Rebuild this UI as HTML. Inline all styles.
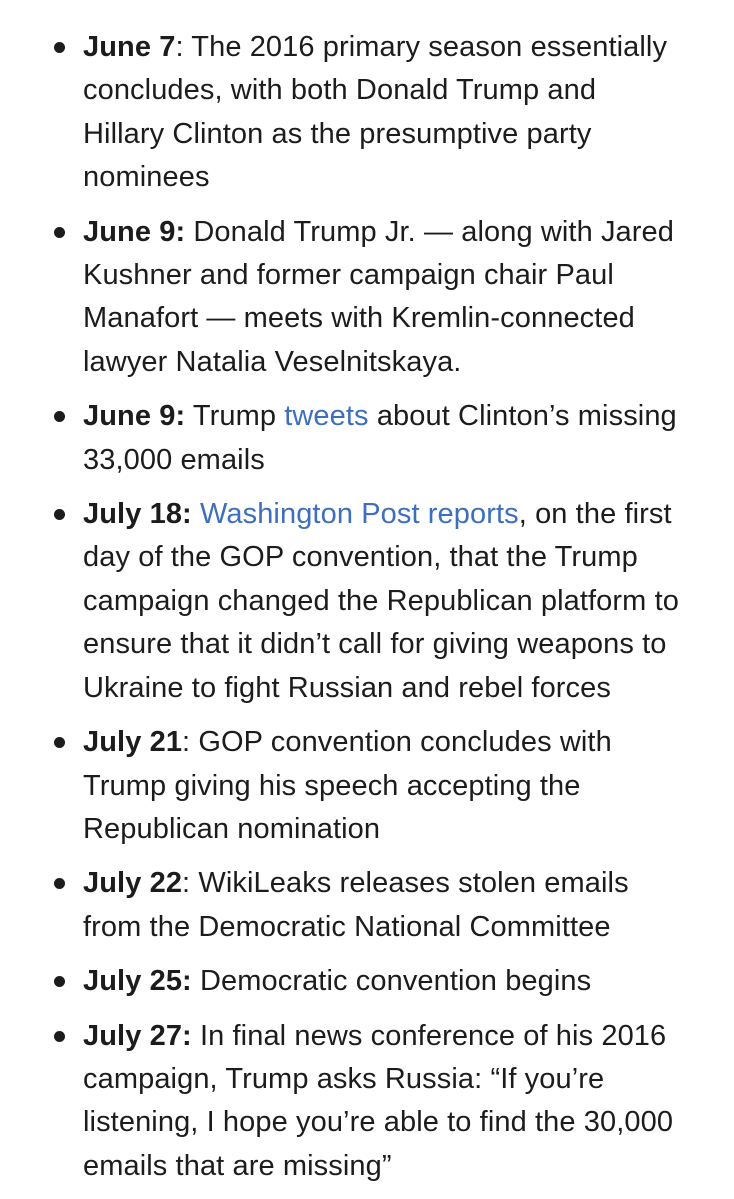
<!DOCTYPE html>
<html><head><meta charset="utf-8">
<style>
html,body{margin:0;padding:0;background:#fff;width:734px;height:1199px;overflow:hidden}
body{font-family:"Liberation Sans",Helvetica,Arial,sans-serif;font-size:29px;letter-spacing:0.1px;line-height:43.4px;color:#1c1c1c}
ul{margin:0;padding:26px 0 0 83px;list-style:none}
li{position:relative;margin:0 0 11px 0;white-space:nowrap}
li:before{content:"";position:absolute;left:-29px;top:16px;width:11px;height:11px;border-radius:50%;background:#1c1c1c}
b{font-weight:bold}
a{color:#3d6fbf;text-decoration:none}
</style></head><body>
<ul>
<li><b>June 7</b>: The 2016 primary season essentially<br>concludes, with both Donald Trump and<br>Hillary Clinton as the presumptive party<br>nominees</li>
<li><b>June 9:</b> Donald Trump Jr. — along with Jared<br>Kushner and former campaign chair Paul<br>Manafort — meets with Kremlin-connected<br>lawyer Natalia Veselnitskaya.</li>
<li><b>June 9:</b> Trump <a>tweets</a> about Clinton’s missing<br>33,000 emails</li>
<li><b>July 18:</b> <a>Washington Post reports</a>, on the first<br>day of the GOP convention, that the Trump<br>campaign changed the Republican platform to<br>ensure that it didn’t call for giving weapons to<br>Ukraine to fight Russian and rebel forces</li>
<li><b>July 21</b>: GOP convention concludes with<br>Trump giving his speech accepting the<br>Republican nomination</li>
<li><b>July 22</b>: WikiLeaks releases stolen emails<br>from the Democratic National Committee</li>
<li><b>July 25:</b> Democratic convention begins</li>
<li><b>July 27:</b> In final news conference of his 2016<br>campaign, Trump asks Russia: “If you’re<br>listening, I hope you’re able to find the 30,000<br>emails that are missing”</li>
</ul>
</body></html>
